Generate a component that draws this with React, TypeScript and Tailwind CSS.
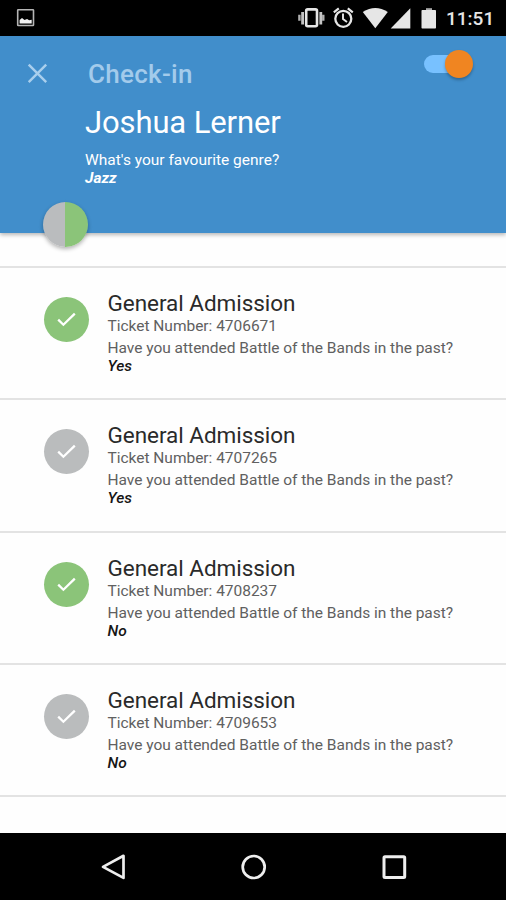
type Ticket = { number: string; answer: string; checkedIn: boolean };

const tickets: Ticket[] = [
  { number: "4706671", answer: "Yes", checkedIn: true },
  { number: "4707265", answer: "Yes", checkedIn: false },
  { number: "4708237", answer: "No", checkedIn: true },
  { number: "4709653", answer: "No", checkedIn: false },
];

function StatusBar() {
  return (
    <div className="flex h-[35.5px] shrink-0 items-center bg-black pl-4 pr-[11px] text-[#e6e6e6]">
      <svg className="h-[20px] w-[20px]" viewBox="0 0 20 20" fill="none">
        <rect x="1.7" y="1.7" width="15.8" height="15.8" rx=".6" stroke="#b5b5b5" strokeWidth="1.6" />
        <path d="M3.6 15.6V12L6 9.9l2.5 2 2.6-1 2 1.3 2.6-.4v3.8Z" fill="#f4f4f4" />
      </svg>
      <svg className="ml-auto h-[35px] w-[146px]" viewBox="294 0 146 35" fill="none">
        <rect x="306.2" y="9.4" width="10.8" height="16.8" rx="1.5" stroke="currentColor" strokeWidth="2.6" />
        <path d="M302.6 11.9v12.5M320.8 11.9v12.5" stroke="#c4c4c4" strokeWidth="2.8" />
        <path d="M299.4 14.8v6M323.3 14.8v6" stroke="#b0b0b0" strokeWidth="2.4" />
        <circle cx="343.3" cy="18.8" r="8" stroke="currentColor" strokeWidth="2.3" />
        <path d="M343 13.5V19l4 3" stroke="currentColor" strokeWidth="1.9" />
        <path d="m333.8 12.3 5-3.9M352.8 12.3l-5-3.9" stroke="currentColor" strokeWidth="2.2" />
        <path d="M362.8 12.1Q375.3 3.7 387.8 12.1L375.3 28.2Z" fill="currentColor" />
        <path d="M410.3 8.2v20.2H390.7Z" fill="currentColor" />
        <path d="M426 8h6v2h3.2q.8 0 .8.8v17q0 .7-.8.7h-12.9q-.8 0-.8-.7v-17q0-.8.8-.8h3.7Z" fill="currentColor" />
        <path d="M426 8h6v1.7h-6Z" fill="#8b8b8b" />
      </svg>
      <time className="ml-[6px] mt-[3px] w-[49px] text-[19px] font-medium leading-5">11:51</time>
    </div>
  );
}

function Header() {
  return (
    <header className="relative h-[197.5px] shrink-0 bg-[#418ecb] pl-[85px] text-white shadow-[0_2px_4px_rgba(0,0,0,.28)]">
      <svg className="absolute left-[27px] top-[27.5px] h-[21px] w-[21px]" viewBox="0 0 21 21" fill="none">
        <path d="m1.7 1.7 17.5 17.5M19.2 1.7 1.7 19.2" stroke="#a9cfed" strokeWidth="2.4" />
      </svg>
      <div className="pl-[3px] pt-[23.5px] text-[26px] font-medium leading-[30px] tracking-[.3px] text-[#a3cbeb]">Check-in</div>
      <h1 className="mt-[16px] text-[31px] leading-[36px] tracking-[-.12px]">Joshua Lerner</h1>
      <p className="mt-[10px] text-[15.5px] leading-[18px]">What's your favourite genre?</p>
      <p className="text-[15.5px] font-bold italic leading-[18px]">Jazz</p>
      <div className="absolute left-[424px] top-[18.5px] flex h-[19px] w-[49px] items-center justify-end rounded-full">
        <span className="mr-auto h-[18px] w-[40px] rounded-full bg-[#78c1ff]" />
        <span className="absolute right-0 size-[28px] rounded-full bg-[#f08521] shadow-[0_2px_3px_rgba(0,0,0,.28)]" />
      </div>
      <span className="absolute left-[43px] top-[166px] flex size-[45px] overflow-hidden rounded-full shadow-[0_2px_4px_rgba(0,0,0,.3)]">
        <span className="w-[22px] bg-[#babcbe]" />
        <span className="flex-1 bg-[#8bc479]" />
      </span>
    </header>
  );
}

function TicketRow({ ticket }: { ticket: Ticket }) {
  return (
    <li className="flex h-[132.25px] border-t-2 border-[#e3e3e3] pl-[44px] pt-[23px]">
      <span
        className={`mt-[6px] flex size-[45px] shrink-0 items-center justify-center rounded-full ${
          ticket.checkedIn ? "bg-[#8bc479]" : "bg-[#babcbd]"
        }`}
      >
        <svg className="size-[21px]" viewBox="0 0 21 21" fill="none">
          <path d="m2.2 10.6 5.2 5.1L18.8 4.6" stroke="white" strokeWidth="2.3" />
        </svg>
      </span>
      <div className="ml-[18.5px] whitespace-nowrap text-[15.5px] leading-[18px] tracking-[-.02px] text-[#606060]">
        <h2 className="pb-[2px] text-[22.5px] leading-[24px] tracking-[-.04px] text-[#2a2a2a]">General Admission</h2>
        <p>Ticket Number: {ticket.number}</p>
        <p className="mt-[4px]">Have you attended Battle of the Bands in the past?</p>
        <p className="font-medium italic text-[#151515]">{ticket.answer}</p>
      </div>
    </li>
  );
}

function NavigationBar() {
  return (
    <nav className="flex h-[67px] shrink-0 items-center justify-between bg-black pl-[100px] pr-[98px]">
      <svg className="h-[30px] w-[28px]" viewBox="0 0 28 30" fill="none" stroke="#eee" strokeWidth="2.7">
        <path d="M23.5 3.8v22.1L3 14.9Z" strokeLinejoin="round" />
      </svg>
      <svg className="h-[30px] w-[28px]" viewBox="0 0 28 30" fill="none" stroke="#eee" strokeWidth="2.7">
        <circle cx="13.7" cy="15" r="11" />
      </svg>
      <svg className="h-[30px] w-[28px]" viewBox="0 0 28 30" fill="none" stroke="#eee" strokeWidth="3">
        <rect x="4" y="4.7" width="20.7" height="20.7" rx="1" />
      </svg>
    </nav>
  );
}

export default function App() {
  return (
    <div className="flex h-[900px] w-[506px] flex-col overflow-hidden bg-[#fefefe] font-['Roboto',sans-serif]">
      <StatusBar />
      <Header />
      <ul className="mt-[33px] h-[531px] shrink-0 border-b-2 border-[#e3e3e3]">
        {tickets.map((ticket) => (
          <TicketRow key={ticket.number} ticket={ticket} />
        ))}
      </ul>
      <div className="flex-1" />
      <NavigationBar />
    </div>
  );
}
